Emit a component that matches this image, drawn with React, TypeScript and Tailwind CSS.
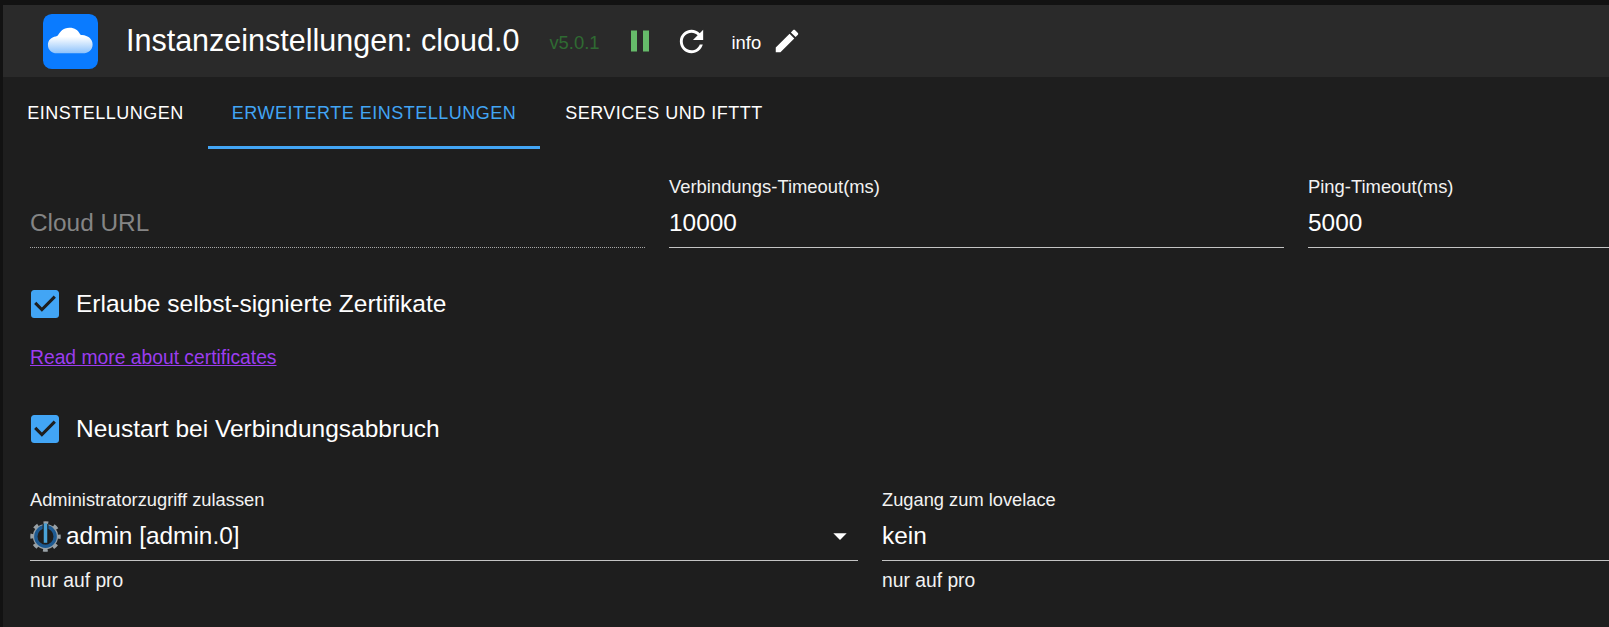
const font = { fontFamily: '"Liberation Sans", Arial, sans-serif' }

const CloudLogo = () => (
  <svg viewBox="0 0 56 56" className="w-[55px] h-[55px] shrink-0">
    <defs>
      <linearGradient id="cloudFill" x1="0" y1="0" x2="0" y2="1">
        <stop offset="0.35" stopColor="#ffffff" />
        <stop offset="1" stopColor="#8dc2fb" />
      </linearGradient>
    </defs>
    <rect width="56" height="56" rx="9" fill="#0a7bff" />
    <path
      d="M14 40c-5 0-9-3.500-9-8.500 0-4.600 3.500-8 8-8.500 1-.2 1.600-.5 2.200-1.300C17.500 18.500 20 14 27 14c5.500 0 8.500 2.500 10.500 6 .5 1 1.200 1.400 2.300 1.500 6 .5 10.700 4 10.700 9.500 0 5.500-4.500 9-10 9z"
      fill="url(#cloudFill)"
    />
  </svg>
)

const AdminIcon = () => (
  <svg viewBox="0 0 32 32" className="w-[31px] h-[31px] shrink-0">
    <circle cx="16" cy="16" r="13" fill="#9aa2a7" />
    <circle cx="16" cy="16" r="14.200" fill="none" stroke="#9aa2a7" strokeWidth="3" strokeDasharray="5 6.150" strokeDashoffset="2.500" />
    <circle cx="16" cy="16" r="10" fill="#1e1e1e" stroke="#1d5a92" strokeWidth="3.500" />
    <rect x="13" y="3" width="6" height="21" fill="#1e1e1e" />
    <rect x="14.200" y="2.500" width="3.600" height="20" fill="#4aa3d8" />
  </svg>
)

const CheckRow = ({ label, className }: { label: string; className: string }) => (
  <div className={`flex items-center ${className}`}>
    <svg viewBox="3 3 18 18" className="w-7 h-7 ml-[1px] shrink-0">
      <path
        fill="#42a5f5"
        d="M19 3H5c-1.110 0-2 .9-2 2v14c0 1.100.89 2 2 2h14c1.110 0 2-.9 2-2V5c0-1.100-.89-2-2-2zm-9 14l-5-5 1.410-1.410L10 14.170l7.590-7.590L19 8l-9 9z"
      />
    </svg>
    <span className="ml-[17px] text-[24.5px] leading-[28px] text-white">{label}</span>
  </div>
)

const Field = ({ label, value }: { label: string; value: string }) => (
  <div className="w-[615px] shrink-0">
    <div className="h-[20px] text-[18.400px] leading-[20px] text-[#f2f2f2]">{label}</div>
    <div className="mt-[13px] h-[38px] border-b border-[#c4c4c4] text-[24.400px] leading-[26px] text-white">{value}</div>
  </div>
)

export default function App() {
  return (
    <div style={font} className="h-screen w-full overflow-hidden bg-[#121212]">
      <div className="ml-[3px] mt-[5px] h-[622px] rounded-tl-[4px] bg-[#1e1e1e]">
        <header className="flex h-[72px] items-center bg-[#2a2a2a] pl-[40px]">
          <CloudLogo />
          <h1 className="ml-[28px] mb-[3px] text-[30.500px] leading-[36px] text-white">Instanzeinstellungen: cloud.0</h1>
          <span className="ml-[30px] mt-1 text-[18.400px] text-[#2f6a32]">v5.0.1</span>
          <svg viewBox="0 0 24 24" className="ml-[22px] h-[36px] w-[36px] fill-[#66bb6a]">
            <path d="M6 19h4V5H6v14zm8-14v14h4V5h-4z" />
          </svg>
          <svg viewBox="0 0 24 24" className="ml-[16px] h-[35px] w-[35px] fill-white">
            <path d="M17.650 6.350C16.200 4.900 14.210 4 12 4c-4.420 0-7.990 3.580-7.990 8s3.570 8 7.990 8c3.730 0 6.840-2.550 7.730-6h-2.080c-.82 2.330-3.040 4-5.650 4-3.310 0-6-2.690-6-6s2.690-6 6-6c1.660 0 3.140.69 4.220 1.780L13 11h7V4l-2.350 2.350z" />
          </svg>
          <span className="ml-[23px] mt-[3px] text-[18.400px] text-white">info</span>
          <svg viewBox="0 0 24 24" className="ml-[11px] h-[30px] w-[30px] fill-white">
            <path d="M3 17.250V21h3.750L17.810 9.940l-3.750-3.750L3 17.250zM20.710 7.040c.39-.39.39-1.020 0-1.410l-2.340-2.340c-.39-.39-1.020-.39-1.410 0l-1.830 1.830 3.750 3.750 1.830-1.830z" />
          </svg>
        </header>

        <nav className="flex h-[72px] text-[18px] tracking-[0.5px]">
          <div className="flex w-[205px] items-center justify-center text-white">EINSTELLUNGEN</div>
          <div className="flex w-[332px] items-center justify-center border-b-[3px] border-[#42a5f5] pt-[3px] text-[#42a5f5]">
            ERWEITERTE EINSTELLUNGEN
          </div>
          <div className="flex w-[248px] items-center justify-center text-white">SERVICES UND IFTTT</div>
        </nav>

        <main className="pl-[27px]">
          <div className="mt-[28px] flex gap-[24px]">
            <div className="w-[615px] shrink-0 pt-[33px]">
              <div className="h-[38px] border-b border-dotted border-[#a8a8a8] text-[24.400px] leading-[26px] text-[#858585]">Cloud URL</div>
            </div>
            <Field label="Verbindungs-Timeout(ms)" value="10000" />
            <Field label="Ping-Timeout(ms)" value="5000" />
          </div>

          <CheckRow label="Erlaube selbst-signierte Zertifikate" className="mt-[42px]" />
          <a className="mt-[29px] block text-[19.300px] leading-[22px] text-[#9c3df0] underline">Read more about certificates</a>
          <CheckRow label="Neustart bei Verbindungsabbruch" className="mt-[46px]" />

          <div className="mt-[47px] flex gap-[24px]">
            <div className="w-[828px] shrink-0">
              <div className="h-[20px] text-[18.300px] leading-[20px] text-[#f2f2f2]">Administratorzugriff zulassen</div>
              <div className="mt-[8px] flex h-[43px] items-center border-b border-[#c4c4c4] pb-[6px]">
                <AdminIcon />
                <span className="ml-[5px] text-[24.400px] leading-[28px] text-white">admin [admin.0]</span>
                <svg viewBox="0 0 24 24" className="ml-auto mr-[2px] h-[32px] w-[32px] fill-white">
                  <path d="M7 10l5 5 5-5z" />
                </svg>
              </div>
              <div className="mt-[10px] text-[19.300px] leading-[20px] text-[#f2f2f2]">nur auf pro</div>
            </div>
            <div className="w-[829px] shrink-0">
              <div className="h-[20px] text-[18.300px] leading-[20px] text-[#f2f2f2]">Zugang zum lovelace</div>
              <div className="mt-[8px] flex h-[43px] items-center border-b border-[#c4c4c4] pb-[6px]">
                <span className="text-[24.400px] leading-[28px] text-white">kein</span>
              </div>
              <div className="mt-[10px] text-[19.300px] leading-[20px] text-[#f2f2f2]">nur auf pro</div>
            </div>
          </div>
        </main>
      </div>
    </div>
  )
}
